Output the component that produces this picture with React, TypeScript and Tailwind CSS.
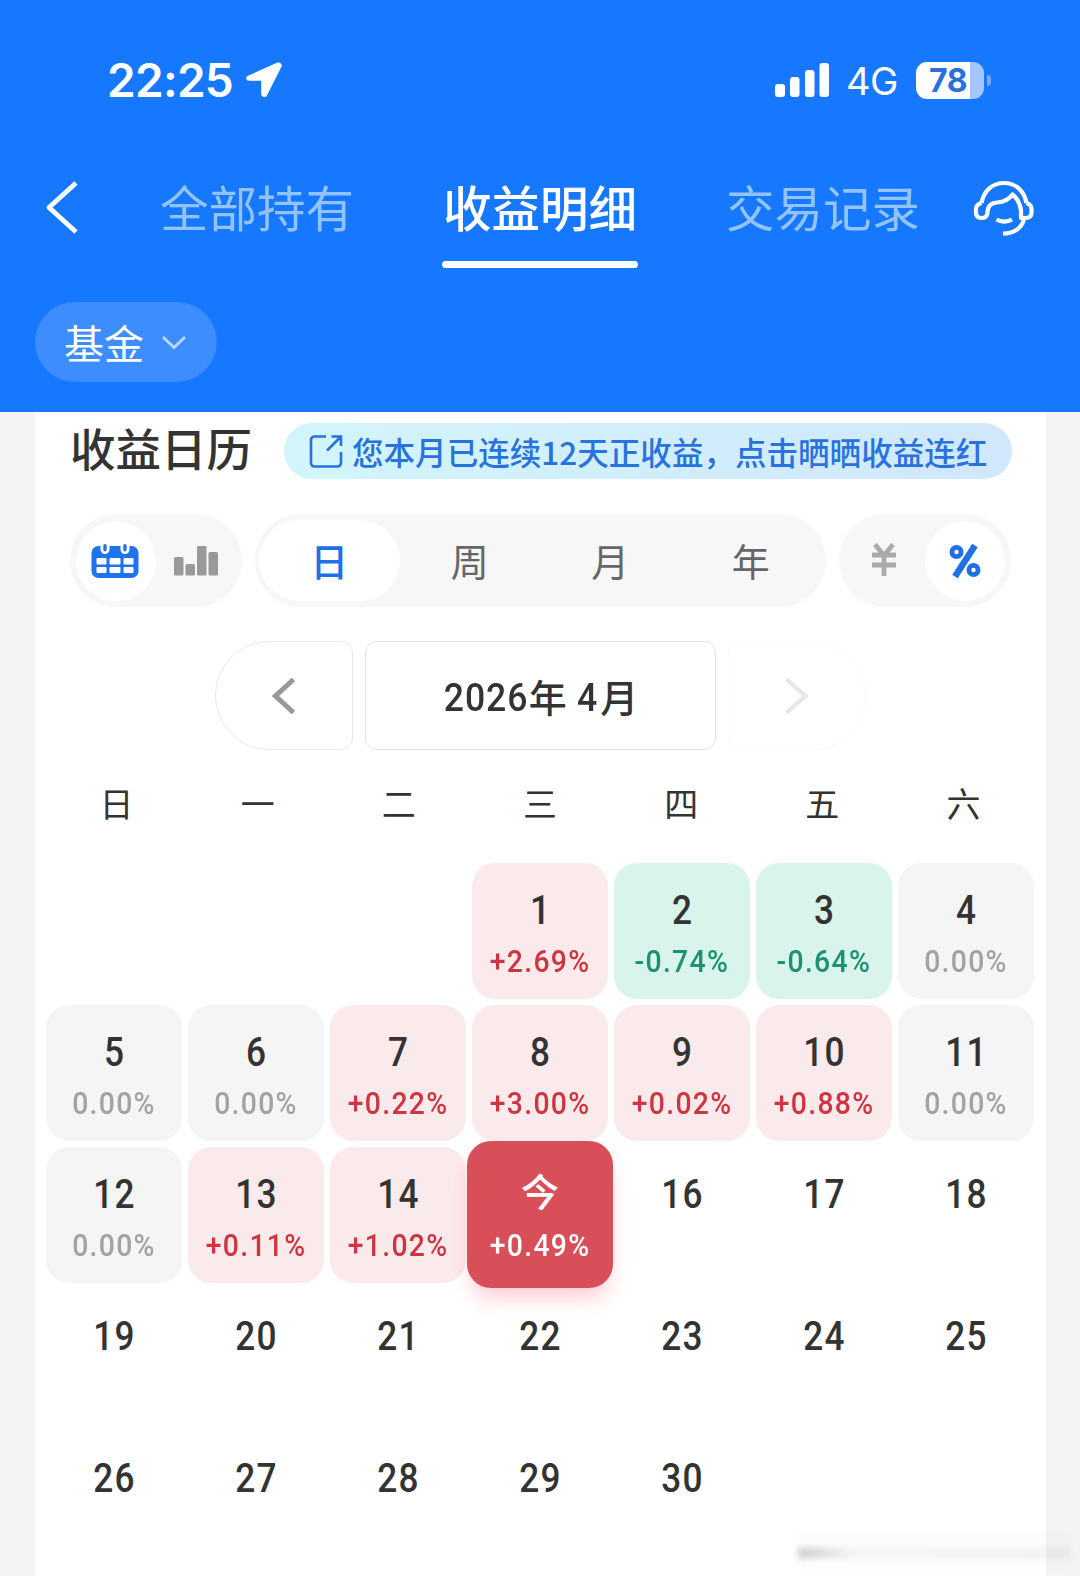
import clsx from "clsx";

type Day = {
  day: string;
  rate?: string;
  today?: boolean;
};

const navTabs = [
  { name: "全部持有", active: false },
  { name: "收益明细", active: true },
  { name: "交易记录", active: false },
];

const periods = ["日", "周", "月", "年"];
const weekdays = ["日", "一", "二", "三", "四", "五", "六"];

// Rates by day of month, the days after today have none
const rates = [
  "+2.69%",
  "-0.74%",
  "-0.64%",
  "0.00%",
  "0.00%",
  "0.00%",
  "+0.22%",
  "+3.00%",
  "+0.02%",
  "+0.88%",
  "0.00%",
  "0.00%",
  "+0.11%",
  "+1.02%",
  "+0.49%",
];

const TODAY = 15;
const FIRST_WEEKDAY = 3;

const days: Day[] = Array.from({ length: 30 }, (_, i) => ({
  day: i + 1 === TODAY ? "今" : String(i + 1),
  rate: rates[i],
  today: i + 1 === TODAY,
}));

function StatusBar() {
  return (
    <div className="flex h-[160px] items-center pl-[107px] pr-[89px] text-white">
      <span className="w-[127px] whitespace-nowrap font-['Inter'] text-[46px] font-semibold leading-none tracking-[-0.7px]">
        22:25
      </span>
      <svg className="ml-[11px] h-[36px] w-[37px]" viewBox="0 0 37 36">
        <path
          d="M32.500 2.200 3.500 15.200c-1.200.6-1 2.100.4 2.100H16.500c.8 0 1.200.4 1.200 1.200v13.500c0 1.800 2.200 2.200 3 .6L35 4.400c.7-1.500-.9-2.900-2.500-2.200Z"
          fill="currentColor"
          stroke="currentColor"
          strokeWidth="3"
          strokeLinejoin="round"
        />
      </svg>
      <svg className="ml-auto h-[36px] w-[56px]" viewBox="0 0 56 36" fill="currentColor">
        <rect x="1" y="22" width="10" height="13" rx="3" />
        <rect x="16" y="15" width="9.500" height="20" rx="3" />
        <rect x="31" y="8" width="9.500" height="27" rx="3" />
        <rect x="45.500" y="1" width="9.500" height="34" rx="3" />
      </svg>
      <span className="ml-[16px] mt-[2px] w-[51px] font-['Inter'] text-[38px] leading-none tracking-[-0.5px]">
        4G
      </span>
      <div className="ml-[19px] flex items-center">
        <div className="flex h-[37px] w-[68px] items-center justify-center rounded-[11px] bg-linear-to-r from-white from-79% to-[#a3c6ff] to-79% font-['Inter'] text-[32px] font-bold leading-none text-[#2a70dc]">
          <span className="-ml-[4px] mt-[1px] tracking-[-0.5px]">78</span>
        </div>
        <div className="ml-[3px] h-[11px] w-[4px] rounded-r-full bg-[#79adff]" />
      </div>
    </div>
  );
}

function NavBar() {
  return (
    <div className="flex h-[108px] text-white">
      <svg
        className="ml-[44px] mt-[20px] h-[54px] w-[34px]"
        viewBox="0 0 34 54"
        fill="none"
        stroke="currentColor"
        strokeWidth="4.800"
      >
        <path d="M32 3 5 27.500 32 52" strokeLinejoin="round" />
      </svg>
      <div className="ml-[81px] flex gap-[87px]">
        {navTabs.map((tab) => (
          <div key={tab.name} className="relative flex w-[196px] justify-center">
            <span
              className={clsx(
                "mt-[14px] whitespace-nowrap text-[48.500px] leading-[64px]",
                tab.active ? "font-medium" : "text-[#93c3ff]"
              )}
            >
              {tab.name}
            </span>
            {tab.active && (
              <span className="absolute bottom-0 left-0 h-[7px] w-full rounded-full bg-white" />
            )}
          </div>
        ))}
      </div>
      <svg
        className="ml-[52px] mt-[19px] h-[58px] w-[62px] shrink-0"
        viewBox="0 0 62 58"
        fill="none"
        stroke="currentColor"
        strokeWidth="4.200"
        strokeLinejoin="round"
      >
        <path d="M8.500 24C11 11 20 4 31 4s20 7 22.500 20" />
        <path d="M8.500 24C5 25 3 27 3 30v3.500c0 3.500 2 5.500 5.500 5.500s6-2 6-5.500C14.500 27 18 24 24 23.500c7-.5 12-3 15.500-8 4.500 3.500 7.500 9 8.500 16V39h4.500c4 0 6-2 6-5.500V30c0-3-2-5-5-6" />
        <path d="M51 39C50 48 42 54.500 30 54.500" />
        <path d="M23.500 40.500c4.500 2.800 11 2.800 15.500 0" />
      </svg>
    </div>
  );
}

function ShareBanner() {
  return (
    <div className="flex h-[56px] w-[728px] items-center rounded-full bg-linear-to-r from-[#d2f5fb] to-[#d0e7fc] pl-[25px] text-[#2872df]">
      <svg
        className="h-[34px] w-[34px]"
        viewBox="0 0 34 34"
        fill="none"
        stroke="currentColor"
        strokeWidth="2.600"
      >
        <path d="M17 2.500H5.500a3.500 3.500 0 0 0-3.500 3.500v23a3.500 3.500 0 0 0 3.500 3.500h23a3.500 3.500 0 0 0 3.500-3.500V18" />
        <path d="M22.500 2.500H32V12M31.500 3 18 16.500" />
      </svg>
      <span className="ml-[9px] whitespace-nowrap text-[31.550px] font-medium leading-[56px]">
        您本月已连续12天正收益，点击晒晒收益连红
      </span>
    </div>
  );
}

function CalendarIcon() {
  return (
    <svg className="-ml-[2px] h-[36px] w-[48px]" viewBox="0 0 48 36">
      <rect x="0.500" y="3" width="47" height="32" rx="7" fill="#1e73ee" />
      <g fill="#fff">
        <path d="M9.500 0h9v6.500a4.500 4.500 0 0 1-9 0ZM29.500 0h9v6.500a4.500 4.500 0 0 1-9 0Z" />
        <rect x="5.500" y="15" width="10" height="6.500" rx="1" />
        <rect x="18.500" y="15" width="11" height="6.500" rx="1" />
        <rect x="32.500" y="15" width="10" height="6.500" rx="1" />
        <rect x="5.500" y="24" width="10" height="6" rx="1" />
        <rect x="18.500" y="24" width="11" height="6" rx="1" />
        <rect x="32.500" y="24" width="10" height="6" rx="1" />
      </g>
      <g fill="#2b72d8">
        <rect x="12.300" y="1" width="3.400" height="7.500" rx="1.700" />
        <rect x="32.300" y="1" width="3.400" height="7.500" rx="1.700" />
      </g>
    </svg>
  );
}

function BarsIcon() {
  return (
    <svg className="h-[31px] w-[44px]" viewBox="0 0 44 31" fill="#999">
      <rect x="0" y="12" width="9.500" height="18.500" rx="1.500" />
      <rect x="11.500" y="19" width="9.500" height="11.500" rx="1.500" />
      <rect x="23" y="1" width="9.500" height="29.500" rx="1.500" />
      <rect x="34.500" y="7" width="9.500" height="23.500" rx="1.500" />
    </svg>
  );
}

function Filters() {
  return (
    <div className="ml-[35px] mt-[35px] flex h-[93px] gap-[13px]">
      <div className="flex w-[172px] items-center rounded-full bg-[#f7f7f7] pl-[6px]">
        <div className="flex size-[80px] items-center justify-center rounded-full bg-white">
          <CalendarIcon />
        </div>
        <div className="flex w-[80px] justify-center">
          <BarsIcon />
        </div>
      </div>
      <div className="flex w-[571px] items-center rounded-full bg-[#f7f7f7] pl-[4px] text-[38px]">
        {periods.map((period, i) => (
          <div
            key={period}
            className={clsx(
              "flex h-[81px] w-[140.500px] items-center justify-center rounded-full pb-[3px]",
              i === 0 ? "bg-white font-medium text-[#1f70e6]" : "text-[#666]"
            )}
          >
            {period}
          </div>
        ))}
      </div>
      <div className="flex w-[172px] items-center rounded-full bg-[#f7f7f7] pl-[6px]">
        <div className="flex w-[80px] justify-center">
          <svg
            className="-ml-[2px] -mt-[2px] h-[34px] w-[26px]"
            viewBox="0 0 26 34"
            fill="none"
            stroke="#aaa"
            strokeWidth="4.800"
          >
            <path d="M4 1.500 13 12.500 22 1.500M13 12V33M1 12H25M1 22H25" />
          </svg>
        </div>
        <div className="flex size-[80px] items-center justify-center rounded-full bg-white">
          <svg
            className="h-[34px] w-[32px]"
            viewBox="0 0 32 34"
            fill="none"
            stroke="#1f70e6"
            strokeWidth="4.800"
          >
            <circle cx="7.500" cy="8" r="4.600" />
            <circle cx="24.500" cy="26" r="4.600" />
            <path d="M26 1.500 6 32.500" strokeWidth="6.500" />
          </svg>
        </div>
      </div>
    </div>
  );
}

function MonthPicker() {
  return (
    <div className="mt-[34px] flex h-[109px] justify-center gap-[12px]">
      <div className="flex w-[138px] items-center justify-center rounded-l-[54px] rounded-r-[12px] border border-[#e8e8e8]">
        <svg className="h-[36px] w-[24px]" viewBox="0 0 24 36" fill="none">
          <path d="M21.500 1.500 3.500 18l18 16.500" stroke="#999" strokeWidth="5" />
        </svg>
      </div>
      <div className="flex w-[351px] items-center justify-center rounded-[12px] border border-[#e5e5e5] text-[38px] font-medium text-[#333]">
        <div className="mt-[2px] flex items-center whitespace-nowrap leading-[50px]">
          <span className="-mx-[4px] mt-[2px] inline-block scale-x-[0.9] font-['Roboto'] text-[39.500px] tracking-[1.100px]">
            2026
          </span>
          <span className="-mt-[2px]">年</span>
          <span className="ml-[9px] mt-[2px] inline-block scale-x-[0.9] font-['Roboto'] text-[39.500px]">
            4
          </span>
          <span className="-mt-[2px] ml-[2px]">月</span>
        </div>
      </div>
      <div className="flex w-[138px] items-center justify-center rounded-l-[12px] rounded-r-[54px] border border-[#fafafa]">
        <svg className="h-[36px] w-[24px]" viewBox="0 0 24 36" fill="none">
          <path d="M1.500 1.500 20.500 18 1.500 34.500" stroke="#e7e7e7" strokeWidth="4.200" />
        </svg>
      </div>
    </div>
  );
}

function DayCell({ day, rate, today }: Day) {
  const up = rate?.startsWith("+");
  const down = rate?.startsWith("-");

  return (
    <div
      className={clsx(
        "flex flex-col items-center font-['Roboto','Noto_Sans_CJK_SC',sans-serif] font-medium",
        today
          ? "z-10 -mx-[5px] -mt-[6px] h-[147px] rounded-[24px] bg-[#d84f59] pt-[6px] text-white shadow-[0_14px_22px_-6px_rgba(255,60,90,0.3)]"
          : "h-[136px] rounded-[23px] text-[#333]",
        !today && up && "bg-[#fbeaec]",
        !today && down && "bg-[#d8f4eb]",
        rate && !up && !down && "bg-[#f5f5f5]"
      )}
    >
      <span
        className={clsx(
          "mt-[23px] h-[48px] leading-[48px]",
          today
            ? "-translate-y-[1px] text-[38px]"
            : "translate-x-[0.500px] translate-y-[0.500px] scale-x-[0.88] text-[40px] tracking-[1.200px]"
        )}
      >
        {day}
      </span>
      {rate && (
        <span
          className={clsx(
            "mt-[8px] scale-x-[0.93] whitespace-nowrap text-[30.500px] leading-[40px] tracking-[1.400px]",
            !today && up && "text-[#cf3541]",
            !today && down && "text-[#1c9273]",
            !up && !down && "text-[#a3a3a3]"
          )}
        >
          {rate}
        </span>
      )}
    </div>
  );
}

function Calendar() {
  return (
    <>
      <div className="ml-[11px] mt-[29px] grid w-[988px] grid-cols-7 text-center text-[34px] leading-[48px] text-[#333]">
        {weekdays.map((weekday) => (
          <span key={weekday}>{weekday}</span>
        ))}
      </div>
      <div className="ml-[11px] mt-[36px] grid w-[988px] auto-rows-[136px] grid-cols-7 gap-[6px]">
        {Array.from({ length: FIRST_WEEKDAY }, (_, i) => (
          <div key={`blank-${i}`} />
        ))}
        {days.map((item) => (
          <DayCell key={item.day} {...item} />
        ))}
      </div>
    </>
  );
}

export default function App() {
  return (
    <div className="relative h-[1576px] w-[1080px] overflow-hidden bg-[#f4f4f4] font-['Noto_Sans_CJK_SC',sans-serif]">
      <header className="h-[412px] bg-[#1677ff]">
        <StatusBar />
        <NavBar />
        <div className="ml-[35px] mt-[34px] flex h-[80px] w-[182px] items-center rounded-full bg-[#3d8dff] pl-[29px] text-white">
          <span className="text-[40px] leading-[60px]">基金</span>
          <svg className="ml-[17px] mt-[2px] h-[16px] w-[26px]" viewBox="0 0 26 16" fill="none">
            <path d="M2 2 13 12.500 24 2" stroke="#b9d6ff" strokeWidth="3" />
          </svg>
        </div>
      </header>

      <main className="ml-[35px] h-[1164px] w-[1011px] bg-white pt-[11px]">
        <div className="flex h-[56px] items-center pl-[35px]">
          <h1 className="-mt-[9px] w-[214px] whitespace-nowrap text-[45.500px] font-medium leading-[60px] text-[#333]">
            收益日历
          </h1>
          <ShareBanner />
        </div>
        <Filters />
        <MonthPicker />
        <Calendar />
      </main>

      {/* Faded watermark strip in the corner */}
      <div className="absolute bottom-[8px] right-[10px] h-[38px] w-[272px] bg-black/[0.012] pt-[18px] blur-[3px]">
        <div className="h-[10px] w-full bg-linear-to-r from-black/20 via-black/3 via-20% to-black/4" />
      </div>
    </div>
  );
}
